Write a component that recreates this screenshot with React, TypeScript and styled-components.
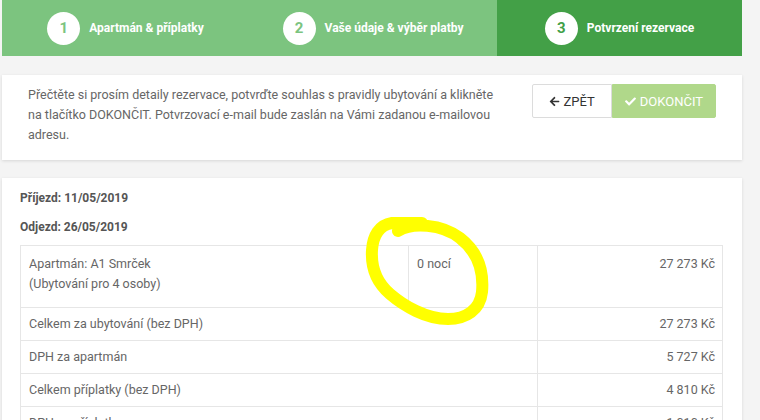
import React from "react";
import styled, { createGlobalStyle } from "styled-components";
import { FaArrowLeft, FaCheck } from "react-icons/fa";

const GlobalStyle = createGlobalStyle`
  body {
    margin: 0;
    background: #f4f4f4;
    font-family: Roboto, "Liberation Sans", sans-serif;
  }
`;

interface StepProps {
  active?: boolean;
}

interface CellProps {
  right?: boolean;
}

const Page = styled.div`
  position: relative;
  width: 740px;
  padding-left: 2px;
  display: flex;
  flex-direction: column;
`;

const Steps = styled.div`
  display: grid;
  grid-template-columns: 247px 248px 245px;
  height: 56px;
  background: #7cc47f;
`;

const Step = styled.div<StepProps>`
  display: flex;
  align-items: center;
  justify-content: center;
  gap: 9px;
  background: ${(props) => (props.active ? "#43a047" : "#7cc47f")};
  color: #fff;
  font-size: 12px;
  font-weight: 700;
`;

const Circle = styled.span<StepProps>`
  width: 33px;
  height: 33px;
  border-radius: 50%;
  background: #fff;
  color: ${(props) => (props.active ? "#43a047" : "#7cc47f")};
  display: flex;
  align-items: center;
  justify-content: center;
  font-size: 15px;
  font-weight: 700;
`;

const Card = styled.div`
  background: #fff;
  box-shadow: 0 1px 3px rgba(0, 0, 0, 0.12);
`;

const IntroCard = styled(Card)`
  margin-top: 19px;
  display: flex;
  justify-content: space-between;
  align-items: flex-start;
  padding: 10px 26px 15px 26px;
`;

const IntroText = styled.p`
  margin: 0;
  width: 470px;
  font-size: 12.5px;
  line-height: 20px;
  color: #666;
`;

const Buttons = styled.div`
  display: flex;
  margin-top: -1px;
`;

const Button = styled.button<{ primary?: boolean }>`
  height: 34px;
  display: flex;
  align-items: center;
  gap: 4px;
  padding: 0 ${(props) => (props.primary ? "12px" : "16px")};
  font-family: Roboto, "Liberation Sans", sans-serif;
  font-size: 13px;
  border: 1px solid ${(props) => (props.primary ? "#b0d88a" : "#dcdcdc")};
  background: ${(props) => (props.primary ? "#b0d88a" : "#fff")};
  color: ${(props) => (props.primary ? "#fff" : "#333")};
  border-radius: ${(props) => (props.primary ? "0 2px 2px 0" : "2px 0 0 2px")};
  svg {
    font-size: 11px;
  }
`;

const SummaryCard = styled(Card)`
  margin-top: 18px;
  padding: 9px 18px 0 18px;
  height: 260px;
`;

const DateLine = styled.div`
  font-size: 12px;
  font-weight: 700;
  color: #555;
  line-height: 22px;
  margin-bottom: 7px;
`;

const Table = styled.table`
  width: 703px;
  border-collapse: collapse;
  margin-top: 2px;
  font-size: 12.5px;
  color: #666;
`;

const Cell = styled.td<CellProps>`
  border: 1px solid #e6e6e6;
  padding: 6px 7px 6px 8px;
  line-height: 20px;
  vertical-align: top;
  text-align: ${(props) => (props.right ? "right" : "left")};
`;

const TallCell = styled(Cell)`
  padding-top: 8px;
  padding-bottom: 13px;
`;

const Annotation = styled.svg`
  position: absolute;
  left: 0;
  top: 0;
  pointer-events: none;
`;

const rows: [string, string][] = [
  ["Celkem za ubytování (bez DPH)", "27 273 Kč"],
  ["DPH za apartmán", "5 727 Kč"],
  ["Celkem příplatky (bez DPH)", "4 810 Kč"],
  ["DPH za příplatky", "1 010 Kč"],
];

const App: React.FC = () => {
  return (
    <Page>
      <GlobalStyle />
      <Steps>
        <Step>
          <Circle>1</Circle>Apartmán &amp; příplatky
        </Step>
        <Step>
          <Circle>2</Circle>Vaše údaje &amp; výběr platby
        </Step>
        <Step active>
          <Circle active>3</Circle>Potvrzení rezervace
        </Step>
      </Steps>

      <IntroCard>
        <IntroText>
          Přečtěte si prosím detaily rezervace, potvrďte souhlas s pravidly ubytování a klikněte na
          tlačítko DOKONČIT. Potvrzovací e-mail bude zaslán na Vámi zadanou e-mailovou adresu.
        </IntroText>
        <Buttons>
          <Button>
            <FaArrowLeft />
            ZPĚT
          </Button>
          <Button primary>
            <FaCheck />
            DOKONČIT
          </Button>
        </Buttons>
      </IntroCard>

      <SummaryCard>
        <DateLine>Příjezd: 11/05/2019</DateLine>
        <DateLine>Odjezd: 26/05/2019</DateLine>
        <Table>
          <colgroup>
            <col style={{ width: 388 }} />
            <col style={{ width: 129 }} />
            <col />
          </colgroup>
          <tbody>
            <tr>
              <TallCell>
                Apartmán: A1 Smrček
                <br />
                (Ubytování pro 4 osoby)
              </TallCell>
              <TallCell>0 nocí</TallCell>
              <TallCell right>27 273 Kč</TallCell>
            </tr>
            {rows.map(([label, value]) => (
              <tr key={label}>
                <Cell colSpan={2}>{label}</Cell>
                <Cell right>{value}</Cell>
              </tr>
            ))}
          </tbody>
        </Table>
      </SummaryCard>

      <Annotation width="760" height="420" viewBox="0 0 760 420">
        <path
          d="M398 231 C 412 222, 442 224, 460 238 C 478 252, 484 270, 482 292 C 480 310, 466 319, 448 319 C 426 319, 404 306, 390 294 C 376 282, 371 266, 372 250 C 373 236, 379 225, 392 223 L 422 223"
          fill="none"
          stroke="#ffff00"
          strokeWidth="12"
          strokeLinecap="round"
          strokeLinejoin="round"
        />
      </Annotation>
    </Page>
  );
};

export default App;
